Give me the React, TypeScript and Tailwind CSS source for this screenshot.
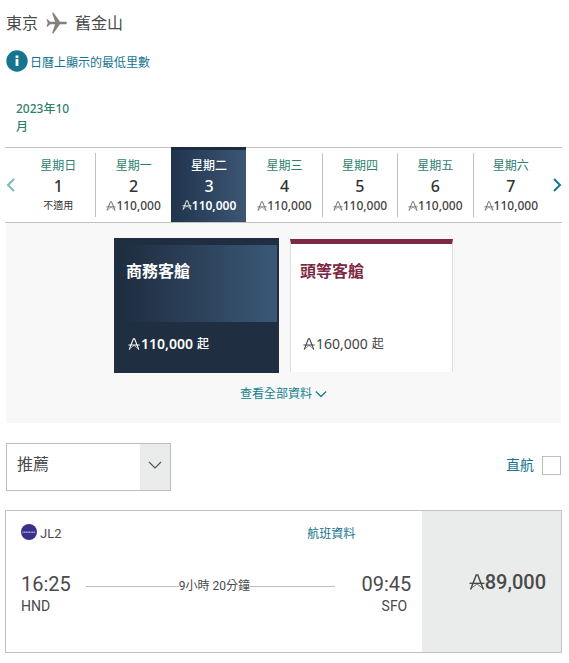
import React, { useState } from 'react'

const days = [
  { date: 1, name: '星期日', miles: '' },
  { date: 2, name: '星期一', miles: '110,000' },
  { date: 3, name: '星期二', miles: '110,000' },
  { date: 4, name: '星期三', miles: '110,000' },
  { date: 5, name: '星期四', miles: '110,000' },
  { date: 6, name: '星期五', miles: '110,000' },
  { date: 7, name: '星期六', miles: '110,000' },
]

// miles currency sign
function Miles({ className }: { className: string }) {
  return (
    <svg viewBox="0 0 12 12" fill="none" stroke="currentColor" className={className} aria-hidden="true">
      <path d="M1.2 11.6 5.4 .8h1.2l4.2 10.8" strokeWidth="1.1" />
      <path d="M.4 7h11.2" strokeWidth="1" />
      <path d="M1.4 11 6 7.4l4.6 3.6" strokeWidth=".6" />
    </svg>
  )
}

function Chevron({ className, d, width = 2 }: { className: string; d: string; width?: number }) {
  return (
    <svg viewBox="0 0 14 14" fill="none" stroke="currentColor" strokeWidth={width} className={className} aria-hidden="true">
      <path d={d} />
    </svg>
  )
}

const LEFT = 'M10 1 4 7l6 6'
const RIGHT = 'm4 1 6 6-6 6'
const DOWN = 'm1 4 6 6 6-6'

function Calendar() {
  const [selected, setSelected] = useState(3)
  return (
    <div className="flex items-stretch border-y border-[#c2c2c2]">
      <button aria-label="上一週" className="flex w-[15px] shrink-0 items-center text-[#7fb8bb]">
        <Chevron d={LEFT} className="-ml-px size-3.5" />
      </button>
      <div className="grid grow grid-cols-7">
        {days.map((day, i) => {
          const on = day.date === selected
          const divider = i > 0 && !on && day.date !== selected + 1
          return (
            <button
              key={day.date}
              onClick={() => setSelected(day.date)}
              className={on
                ? '-mt-px border-t-[3px] border-[#1b2c42] bg-linear-to-r from-[#21344d] to-[#3b5674] pt-[3px] pb-1 text-white'
                : 'py-[5px]'}
            >
              <div className={`flex h-16 flex-col items-center border-l ${on ? 'pt-0.5' : 'pt-[3px]'} ${divider ? 'border-[#c2c2c2]' : 'border-transparent'}`}>
                <span className={`text-xs leading-5 ${on ? 'font-medium' : 'text-[#2f7f70]'}`}>{day.name}</span>
                <span className={`text-base leading-[21px] font-medium ${on ? '' : 'text-[#333]'}`}>{day.date}</span>
                {day.miles
                  ? <span className={`flex items-center text-xs leading-[17px] ${on ? 'font-semibold' : 'font-medium text-[#444]'}`}>
                      <Miles className={on ? 'size-2.5' : 'size-2.5 text-[#666]'} />{day.miles}
                    </span>
                  : <span className="text-[10px] leading-[17px] text-[#333]">不適用</span>}
              </div>
            </button>
          )
        })}
      </div>
      <button aria-label="下一週" className="flex w-3.5 shrink-0 items-center justify-end text-[#14758f]">
        <Chevron d={RIGHT} className="-mr-0.5 size-3.5" />
      </button>
    </div>
  )
}

function Cabins() {
  return (
    <section className="mx-px bg-[#f8f8f8] pt-[15px] pb-5">
      <div className="flex items-start justify-center gap-[11px]">
        <button className="flex h-[135px] w-[165px] flex-col border-t-[7px] border-r-2 border-[#1f2e41] bg-[#1f2e41] text-left text-white">
          <span className="h-[77px] w-full bg-linear-to-r from-[#1f2e41] from-5% to-[#3b5877] pt-3.5 pl-3 text-base leading-6 font-bold">商務客艙</span>
          <span className="flex items-center pt-3 pl-3.5 text-sm leading-5 font-semibold">
            <Miles className="mr-px size-3" />110,000 <span className="ml-1 text-xs font-medium">起</span>
          </span>
        </button>
        <button className="mt-px flex h-[133px] w-[163px] flex-col border-x border-t-[5px] border-x-[#dedede] border-t-[#7c2a42] bg-white text-left">
          <span className="h-[78px] pt-[15px] pl-[9px] text-base leading-6 font-bold text-[#7c2a42]">頭等客艙</span>
          <span className="flex items-center pt-3 pl-3 text-sm leading-5 text-[#444]">
            <Miles className="mr-px size-3" />160,000 <span className="ml-1 text-xs">起</span>
          </span>
        </button>
      </div>
      <a href="#details" className="mt-3 flex items-center justify-center gap-[3px] text-xs leading-[18px] text-[#14808f]">
        查看全部資料
        <Chevron d={DOWN} width={1.5} className="size-3" />
      </a>
    </section>
  )
}

function Filters() {
  return (
    <div className="mt-5 flex items-start justify-between px-px">
      <div className="relative">
        <select aria-label="排序" className="h-12 w-[165px] appearance-none rounded-none border border-[#bdbdbd] bg-white pb-1.5 pl-2.5 text-base text-[#4a4a4a]">
          <option>推薦</option>
        </select>
        <div className="pointer-events-none absolute inset-y-px right-px flex w-[30px] items-center justify-center bg-[#eaecec] pb-1 text-[#555]">
          <Chevron d={DOWN} width={1.2} className="size-3.5" />
        </div>
      </div>
      <label className="mt-[11px] flex items-center gap-2 text-sm leading-5 text-[#14758f]">
        直航
        <input type="checkbox" className="mt-0.5 size-[19px] appearance-none border border-[#bdbdbd] bg-white checked:bg-[#14758f]" />
      </label>
    </div>
  )
}

function Flight() {
  return (
    <article className="mt-[19px] flex h-[143px] border border-[#c2c2c2] font-[Roboto,'Noto_Sans_CJK_TC',sans-serif] text-[#4a4a4a]">
      <div className="grow pt-[11px] pr-[11px] pl-[15px]">
        <div className="flex items-center justify-between pr-14">
          <span className="flex items-center gap-[3px] text-[13px] leading-6">
            <svg viewBox="0 0 16 16" className="-mt-1 size-4" aria-hidden="true">
              <circle cx="8" cy="8" r="8" fill="#37318a" />
              <path d="M1.5 8.2h13" stroke="#aaa6d8" strokeWidth="1.6" strokeDasharray="1.2 .4" />
            </svg>
            JL2
          </span>
          <a href="#flight" className="text-xs leading-6 text-[#14758f]">航班資料</a>
        </div>
        <div className="mt-[26px] flex items-start">
          <div>
            <div className="text-xl leading-6">16:25</div>
            <div className="text-sm leading-5">HND</div>
          </div>
          <div className="mt-1 mr-[26px] ml-[15px] flex grow items-center text-xs leading-5">
            <span className="h-px w-[93px] bg-[#bdbdbd]" />
            9小時 20分鐘
            <span className="h-px grow bg-[#bdbdbd]" />
          </div>
          <div>
            <div className="text-xl leading-6">09:45</div>
            <div className="pr-1 text-right text-sm leading-5">SFO</div>
          </div>
        </div>
      </div>
      <div className="flex w-1/4 shrink-0 items-center justify-end bg-[#eaecec] pr-[15px] text-xl leading-6 font-medium">
        <Miles className="size-4" />89,000
      </div>
    </article>
  )
}

export default function App() {
  return (
    <main className="min-h-screen bg-white pt-3 pr-[7px] pb-2.5 pl-[5px] font-['Noto_Sans','Noto_Sans_CJK_TC',sans-serif]">
      <h1 className="flex items-center pl-px text-base leading-[22px] text-[#4a4a4a]">
        東京
        <svg viewBox="0 0 22 22" fill="#85827b" className="mr-[7px] ml-2 size-[22px]" aria-hidden="true">
          <path d="M21 11c0-.9-1-1.3-2-1.3h-5L7.3.6l-1.2.5 3 8.6H4.2L1.5 7.2l-1 .3L1.8 11 .5 14.5l1 .3 2.7-2.5h4.9l-3 8.6 1.2.5 6.7-9.1h5c1 0 2-.4 2-1.3Z" />
        </svg>
        舊金山
      </h1>
      <p className="mt-4 flex items-center gap-0.5 pl-px text-xs leading-[22px] text-[#14758f]">
        <svg viewBox="0 0 22 22" className="size-[22px]" aria-hidden="true">
          <circle cx="11" cy="11" r="10.7" fill="#14758f" />
          <path d="M9.6 5.5h2.8v2.4H9.6zM9.6 9h2.8v7H9.6z" fill="#fff" />
        </svg>
        <span className="pt-1 leading-[18px]">日曆上顯示的最低里數</span>
      </p>
      <h2 className="mt-7 mb-[11px] ml-[11px] w-[60px] text-xs leading-[18px] font-medium text-[#2f7f70]">2023年10月</h2>
      <Calendar />
      <Cabins />
      <Filters />
      <Flight />
    </main>
  )
}
